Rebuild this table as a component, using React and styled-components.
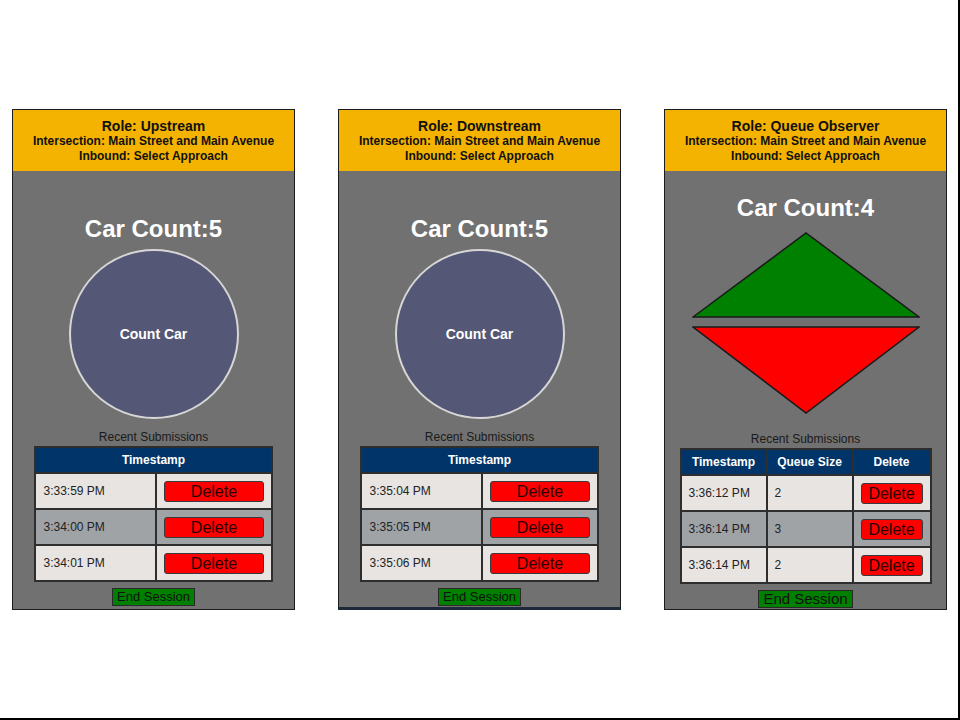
import React from 'react'
import styled, { createGlobalStyle } from 'styled-components'

const GlobalStyle = createGlobalStyle`
    body {
        margin: 0;
        background: #fff;
        font-family: "Liberation Sans", Arial, sans-serif;
    }
`

const panels = [
    {
        role: 'Upstream',
        kind: 'circle',
        count: 5,
        rows: [{ time: '3:33:59 PM' }, { time: '3:34:00 PM' }, { time: '3:34:01 PM' }],
    },
    {
        role: 'Downstream',
        kind: 'circle',
        count: 5,
        rows: [{ time: '3:35:04 PM' }, { time: '3:35:05 PM' }, { time: '3:35:06 PM' }],
        edge: true,
    },
    {
        role: 'Queue Observer',
        kind: 'queue',
        count: 4,
        rows: [
            { time: '3:36:12 PM', size: 2 },
            { time: '3:36:14 PM', size: 3 },
            { time: '3:36:14 PM', size: 2 },
        ],
    },
]

function QueueArrows() {
    return (
        <Arrows width="228" height="182" viewBox="0 0 228 182">
            <polygon points="1,85 114,1 227,85" fill="#008000" stroke="#1a1a1a" strokeWidth="1.5" />
            <polygon points="1,95 227,95 114,181" fill="#ff0000" stroke="#1a1a1a" strokeWidth="1.5" />
        </Arrows>
    )
}

function Panel({ panel }) {
    const queue = panel.kind === 'queue'
    const cols = queue ? [86, 86, 78] : [121, 115]
    return (
        <Card $edge={panel.edge}>
            <Header>
                <RoleLine>Role: {panel.role}</RoleLine>
                <InfoLine>Intersection: Main Street and Main Avenue</InfoLine>
                <InfoLine>Inbound: Select Approach</InfoLine>
            </Header>
            <Body>
                <Count $queue={queue}>Car Count:{panel.count}</Count>
                {queue ? <QueueArrows /> : <CountButton>Count Car</CountButton>}
                <Recent $queue={queue}>Recent Submissions</Recent>
                <Table $width={queue ? 250 : 236}>
                    <colgroup>
                        {cols.map((w, i) => (
                            <Col key={i} $width={w} />
                        ))}
                    </colgroup>
                    <thead>
                        <tr>
                            {queue ? (
                                <>
                                    <Th>Timestamp</Th>
                                    <Th>Queue Size</Th>
                                    <Th>Delete</Th>
                                </>
                            ) : (
                                <Th colSpan={2}>Timestamp</Th>
                            )}
                        </tr>
                    </thead>
                    <tbody>
                        {panel.rows.map((row, i) => (
                            <Row key={i} $dark={i % 2 === 1}>
                                <Td>{row.time}</Td>
                                {queue && <Td>{row.size}</Td>}
                                <Td>
                                    <DeleteButton>Delete</DeleteButton>
                                </Td>
                            </Row>
                        ))}
                    </tbody>
                </Table>
                <EndButton $big={queue}>End Session</EndButton>
            </Body>
        </Card>
    )
}

export default function App() {
    return (
        <>
            <GlobalStyle />
            <Page>
                {panels.map((p) => (
                    <Panel key={p.role} panel={p} />
                ))}
            </Page>
        </>
    )
}

const Page = styled.div`
    width: 960px;
    height: 720px;
    box-sizing: border-box;
    border-right: 2px solid #000;
    border-bottom: 2px solid #000;
    padding: 109px 0 0 12px;
    display: flex;
    align-items: flex-start;
    gap: 43px;
`

const Card = styled.div`
    width: 283px;
    height: 501px;
    box-sizing: border-box;
    border: 1.5px solid #1c1c1c;
    border-bottom: ${(p) => (p.$edge ? '3px solid #1d2a3c' : '1.5px solid #1c1c1c')};
    background: #717171;
    display: flex;
    flex-direction: column;
`

const Header = styled.div`
    background: #f5b301;
    height: 61px;
    box-sizing: border-box;
    padding-top: 8px;
    text-align: center;
    color: #111;
    font-weight: bold;
`

const RoleLine = styled.div`
    font-size: 14px;
    line-height: 16px;
`

const InfoLine = styled.div`
    font-size: 12px;
    line-height: 15px;
`

const Body = styled.div`
    flex: 1;
    display: flex;
    flex-direction: column;
    align-items: center;
`

const Count = styled.div`
    margin-top: ${(p) => (p.$queue ? '23px' : '44px')};
    font-size: 24px;
    line-height: 28px;
    font-weight: bold;
    color: #fff;
`

const CountButton = styled.div`
    margin-top: 6px;
    width: 170px;
    height: 170px;
    box-sizing: border-box;
    border-radius: 50%;
    border: 2px solid #d6d6d6;
    background: #545775;
    color: #fff;
    font-size: 14px;
    font-weight: bold;
    display: flex;
    align-items: center;
    justify-content: center;
`

const Arrows = styled.svg`
    margin-top: 10px;
    display: block;
`

const Recent = styled.div`
    margin-top: ${(p) => (p.$queue ? '18px' : '11px')};
    font-size: 12px;
    line-height: 14px;
    color: #1a1a1a;
`

const Table = styled.table`
    margin-top: 2px;
    width: ${(p) => p.$width}px;
    border-collapse: collapse;
    border: 2px solid #2e2e2e;
    table-layout: fixed;
`

const Col = styled.col`
    width: ${(p) => p.$width}px;
`

const Th = styled.th`
    box-sizing: border-box;
    height: 26px;
    padding: 0;
    background: #01356a;
    color: #fff;
    font-size: 12px;
    font-weight: bold;
    border: 2px solid #2e2e2e;
`

const Row = styled.tr`
    background: ${(p) => (p.$dark ? '#9fa3a6' : '#e7e4e1')};
`

const Td = styled.td`
    box-sizing: border-box;
    height: 36px;
    padding: 0 7px;
    font-size: 12px;
    color: #222;
    border: 2px solid #2e2e2e;
`

const DeleteButton = styled.button`
    display: block;
    width: 100%;
    height: 21px;
    padding: 0;
    border: 1px solid #3a3a3a;
    border-radius: 3px;
    background: #ff0000;
    color: #2a0000;
    font-family: "Liberation Sans", Arial, sans-serif;
    font-size: 16px;
    line-height: 19px;
`

const EndButton = styled.button`
    margin-top: 6px;
    height: 18px;
    padding: 0 4px;
    border: 1px solid #2a2a2a;
    background: #008000;
    color: #111;
    font-family: "Liberation Sans", Arial, sans-serif;
    font-size: ${(p) => (p.$big ? '15px' : '13px')};
    line-height: 16px;
`
